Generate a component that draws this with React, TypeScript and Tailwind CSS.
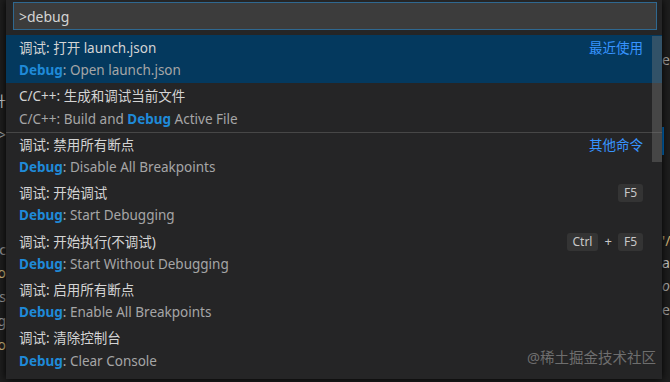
import React from "react";

type Item = {
  label: string;
  pre?: string;
  hl: string;
  post: string;
  right?: "recent" | "other" | "f5" | "ctrlf5";
  active?: boolean;
  sep?: boolean;
};

const items: Item[] = [
  { label: "调试: 打开 launch.json", hl: "Debug", post: ": Open launch.json", right: "recent", active: true },
  { label: "C/C++: 生成和调试当前文件", pre: "C/C++: Build and ", hl: "Debug", post: " Active File" },
  { label: "调试: 禁用所有断点", hl: "Debug", post: ": Disable All Breakpoints", right: "other", sep: true },
  { label: "调试: 开始调试", hl: "Debug", post: ": Start Debugging", right: "f5" },
  { label: "调试: 开始执行(不调试)", hl: "Debug", post: ": Start Without Debugging", right: "ctrlf5" },
  { label: "调试: 启用所有断点", hl: "Debug", post: ": Enable All Breakpoints" },
  { label: "调试: 清除控制台", hl: "Debug", post: ": Clear Console" },
];

const Key = ({ children }: { children: React.ReactNode }) => (
  <span className="flex h-[18px] items-center rounded-[3px] bg-[#343434] px-[6px] text-[12px] text-[#c8c8c8]">
    {children}
  </span>
);

const Right = ({ kind }: { kind?: Item["right"] }) => {
  if (kind === "recent") return <span className="text-[13.5px] text-[#3794ff]">最近使用</span>;
  if (kind === "other") return <span className="text-[13.5px] text-[#3794ff]">其他命令</span>;
  if (kind === "f5") return <Key>F5</Key>;
  if (kind === "ctrlf5")
    return (
      <span className="flex items-center gap-[6px]">
        <Key>Ctrl</Key>
        <span className="text-[13px] text-[#c8c8c8]">+</span>
        <Key>F5</Key>
      </span>
    );
  return null;
};

const Row = ({ item }: { item: Item }) => (
  <div
    className={`flex h-[48.4px] flex-col justify-center pl-[13px] pr-[19px] ${
      item.active ? "bg-[#04395e]" : ""
    } ${item.sep ? "border-t border-[#474747]" : ""}`}
  >
    <div className="flex h-[22px] items-center justify-between">
      <span className="text-[13.5px] text-[#d4d4d4]">{item.label}</span>
      <Right kind={item.right} />
    </div>
    <div className="h-[22px] whitespace-pre text-[13.5px] leading-[22px] text-[#a6a6a6]">
      {item.pre}
      <span className="font-bold text-[#1f8ad8]">{item.hl}</span>
      {item.post}
    </div>
  </div>
);

const leftBits = [
  { h: 88, t: "", c: "" },
  { h: 24, t: "升", c: "text-[#d4d4d4]" },
  { h: 44, t: ">", c: "text-[#aaaaaa]" },
  { h: 82, t: "", c: "" },
  { h: 22, t: "c", c: "text-[#9a9a9a]" },
  { h: 24, t: "o", c: "text-[#d7ba7d]" },
  { h: 24, t: "es", c: "text-[#9a9a9a]" },
  { h: 24, t: "ng", c: "text-[#9a9a9a]" },
  { h: 24, t: "o", c: "text-[#d7ba7d]" },
];

export default function App() {
  return (
    <div className="flex h-[382px] w-[670px] overflow-hidden bg-[#1e1e1e] font-['Noto_Sans','Noto_Sans_CJK_SC',sans-serif]">
      {/* editor behind, left side */}
      <div className="flex w-[6px] shrink-0 flex-col">
        {leftBits.map((b, i) => (
          <div
            key={i}
            style={{ height: b.h }}
            className={`flex items-center justify-end whitespace-nowrap text-[14px] ${b.c}`}
          >
            {b.t}
          </div>
        ))}
      </div>

      {/* quick pick */}
      <div className="relative flex h-[379px] w-[656px] shrink-0 flex-col bg-[#252526] shadow-[0_0_8px_#000000]">
        <div className="pl-[7px] pr-[5px] pt-[2px]">
          <div className="flex h-[28px] items-center border border-[#2f6890] bg-[#3c3c3c] pl-[5px] text-[14px] text-[#d4d4d4]">
            &gt;debug
          </div>
        </div>
        <div className="relative mt-[5px] flex flex-col">
          {items.map((it, i) => (
            <Row key={i} item={it} />
          ))}
          {/* scrollbar */}
          <div className="absolute right-0 top-[1px] h-[126px] w-[10px] bg-[#79797966]" />
        </div>
        <div className="absolute bottom-[10px] right-[6px] text-[14.5px] text-[#6e6e6e]">@稀土掘金技术社区</div>
      </div>

      {/* editor behind, right side */}
      <div className="flex flex-1 flex-col text-[14px] text-[#aaaaaa]">
        <div className="h-[48px]" />
        <div className="h-[24px] leading-[24px]">e</div>
        <div className="h-[55px]" />
        <div className="h-[28px] w-[2px] bg-[#0078d4]" />
        <div className="h-[75px]" />
        <div className="h-[22px] leading-[22px] text-[#d7ba7d]">'/</div>
        <div className="h-[22px] leading-[22px] text-[#c8c8c8]">a</div>
        <div className="h-[24px] leading-[24px] italic">o</div>
        <div className="h-[24px] leading-[24px]">e</div>
      </div>
    </div>
  );
}
